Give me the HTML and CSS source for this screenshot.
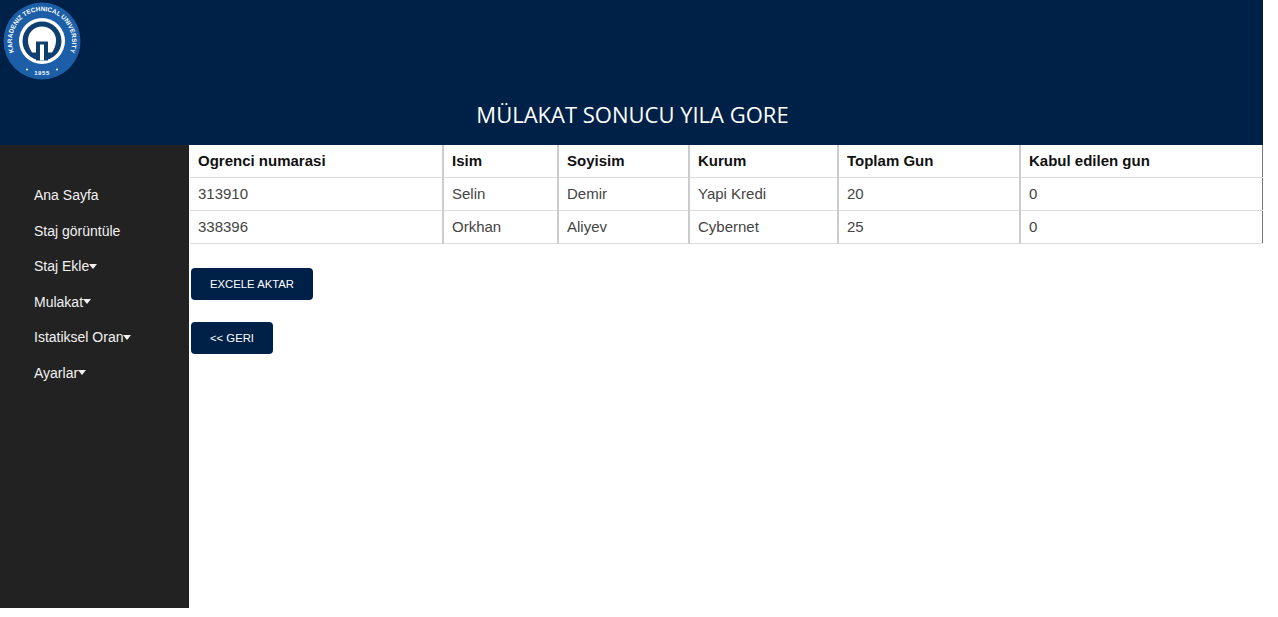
FILE: index.html
```html
<!DOCTYPE html>
<html lang="tr">
<head>
    <meta charset="UTF-8">
    <title>Mülakat Sonucu Yıla Göre</title>
    <link rel="stylesheet" href="styles.css">
</head>
<body>
    <div class="page">
        <div class="header">
            <svg class="logo" width="85" height="82" viewBox="0 0 85 82">
                <defs>
                    <path id="ringTop" d="M17.4 58.2 A30 30 0 1 1 66.6 58.2"></path>
                </defs>
                <circle cx="42" cy="41" r="38.5" fill="#1c5fa8"></circle>
                <circle cx="42" cy="41" r="23" fill="#fff"></circle>
                <circle cx="42" cy="41" r="19.5" fill="#0e3f6e"></circle>
                <path d="M28 40.5 A14 14 0 0 1 56 40.5 C56 45.5 54 49.5 52 52.5 H32 C30 49.5 28 45.5 28 40.5 Z" fill="#fff"></path>
                <path d="M36 41.5 H48 V60.5 H36 Z" fill="#0e3f6e"></path>
                <path d="M40 44.5 H44 V60.5 H40 Z" fill="#fff"></path>
                <text class="logo-text"><textPath href="#ringTop" startOffset="50%" text-anchor="middle">KARADENIZ TECHNICAL UNIVERSITY</textPath></text>
                <text class="logo-year" x="42" y="74.5" text-anchor="middle">1955</text>
                <circle cx="27" cy="69.5" r="1" fill="#fff"></circle>
                <circle cx="57" cy="69.5" r="1" fill="#fff"></circle>
            </svg>
            <h1>MÜLAKAT SONUCU YILA GORE</h1>
        </div>
        <div class="main">
            <div class="sidebar">
                <a href="#">Ana Sayfa</a>
                <a href="#">Staj görüntüle</a>
                <a href="#">Staj Ekle<span class="caret"></span></a>
                <a href="#">Mulakat<span class="caret"></span></a>
                <a href="#">Istatiksel Oran<span class="caret"></span></a>
                <a href="#">Ayarlar<span class="caret"></span></a>
            </div>
            <div class="content">
                <table>
                    <tr class="head-row">
                        <th class="col-no">Ogrenci numarasi</th>
                        <th class="col-name">Isim</th>
                        <th class="col-surname">Soyisim</th>
                        <th class="col-org">Kurum</th>
                        <th class="col-total">Toplam Gun</th>
                        <th>Kabul edilen gun</th>
                    </tr>
                    <tr>
                        <td>313910</td>
                        <td>Selin</td>
                        <td>Demir</td>
                        <td>Yapi Kredi</td>
                        <td>20</td>
                        <td>0</td>
                    </tr>
                    <tr>
                        <td>338396</td>
                        <td>Orkhan</td>
                        <td>Aliyev</td>
                        <td>Cybernet</td>
                        <td>25</td>
                        <td>0</td>
                    </tr>
                </table>
                <button class="btn btn-excel">EXCELE AKTAR</button>
                <button class="btn btn-back">&lt;&lt; GERI</button>
            </div>
        </div>
    </div>
</body>
</html>
```

FILE: styles.css
```css
* {
    margin: 0;
    padding: 0;
    box-sizing: border-box;
}

body {
    font-family: "Liberation Sans", Arial, sans-serif;
    background: #fff;
}

.page {
    width: 1263px;
}

.header {
    height: 145px;
    background: #002147;
    display: flex;
    flex-direction: column;
}

.logo {
    display: block;
    flex: none;
}

.logo-text {
    font-size: 6.4px;
    font-weight: bold;
    fill: #fff;
}

.logo-year {
    font-size: 6px;
    font-weight: bold;
    fill: #fff;
    letter-spacing: 0.6px;
}

.header h1 {
    font-family: "Open Sans", sans-serif;
    color: #fff;
    font-size: 22px;
    font-weight: normal;
    text-align: center;
    margin-top: 17px;
    margin-left: 2px;
}

.main {
    display: flex;
    height: 463px;
}

.sidebar {
    width: 189px;
    flex: none;
    background: #222;
    padding-top: 33px;
}

.sidebar a {
    display: block;
    height: 35.5px;
    line-height: 35.5px;
    padding-left: 34px;
    color: #f1f1f1;
    font-size: 14px;
    text-decoration: none;
}

.caret {
    display: inline-block;
    width: 0;
    height: 0;
    margin-bottom: 2px;
    border-left: 4.5px solid transparent;
    border-right: 4.5px solid transparent;
    border-top: 5px solid #f1f1f1;
    vertical-align: middle;
}

.content {
    flex: 1;
    padding-left: 1px;
}

table {
    width: 100%;
    border-collapse: collapse;
    table-layout: fixed;
    color: #111;
    font-size: 15px;
    border-right: 1px solid #777;
}

tr {
    height: 33px;
    border-bottom: 1px solid #ddd;
}

.head-row {
    height: 32px;
}

th, td {
    text-align: left;
    padding: 0 8px;
    border-right: 2px solid #ccc;
}

th:last-child, td:last-child {
    border-right: 0;
}

td {
    color: #444;
}

.col-no { width: 253px; }
.col-name { width: 115px; }
.col-surname { width: 131px; }
.col-org { width: 149px; }
.col-total { width: 182px; }

.btn {
    display: block;
    height: 32px;
    margin-left: 1px;
    background: #002147;
    color: #fff;
    border: none;
    border-radius: 4px;
    font-family: inherit;
    font-size: 11.3px;
    cursor: pointer;
}

.btn-excel {
    width: 122px;
    margin-top: 24px;
}

.btn-back {
    width: 82px;
    margin-top: 22px;
}
```
